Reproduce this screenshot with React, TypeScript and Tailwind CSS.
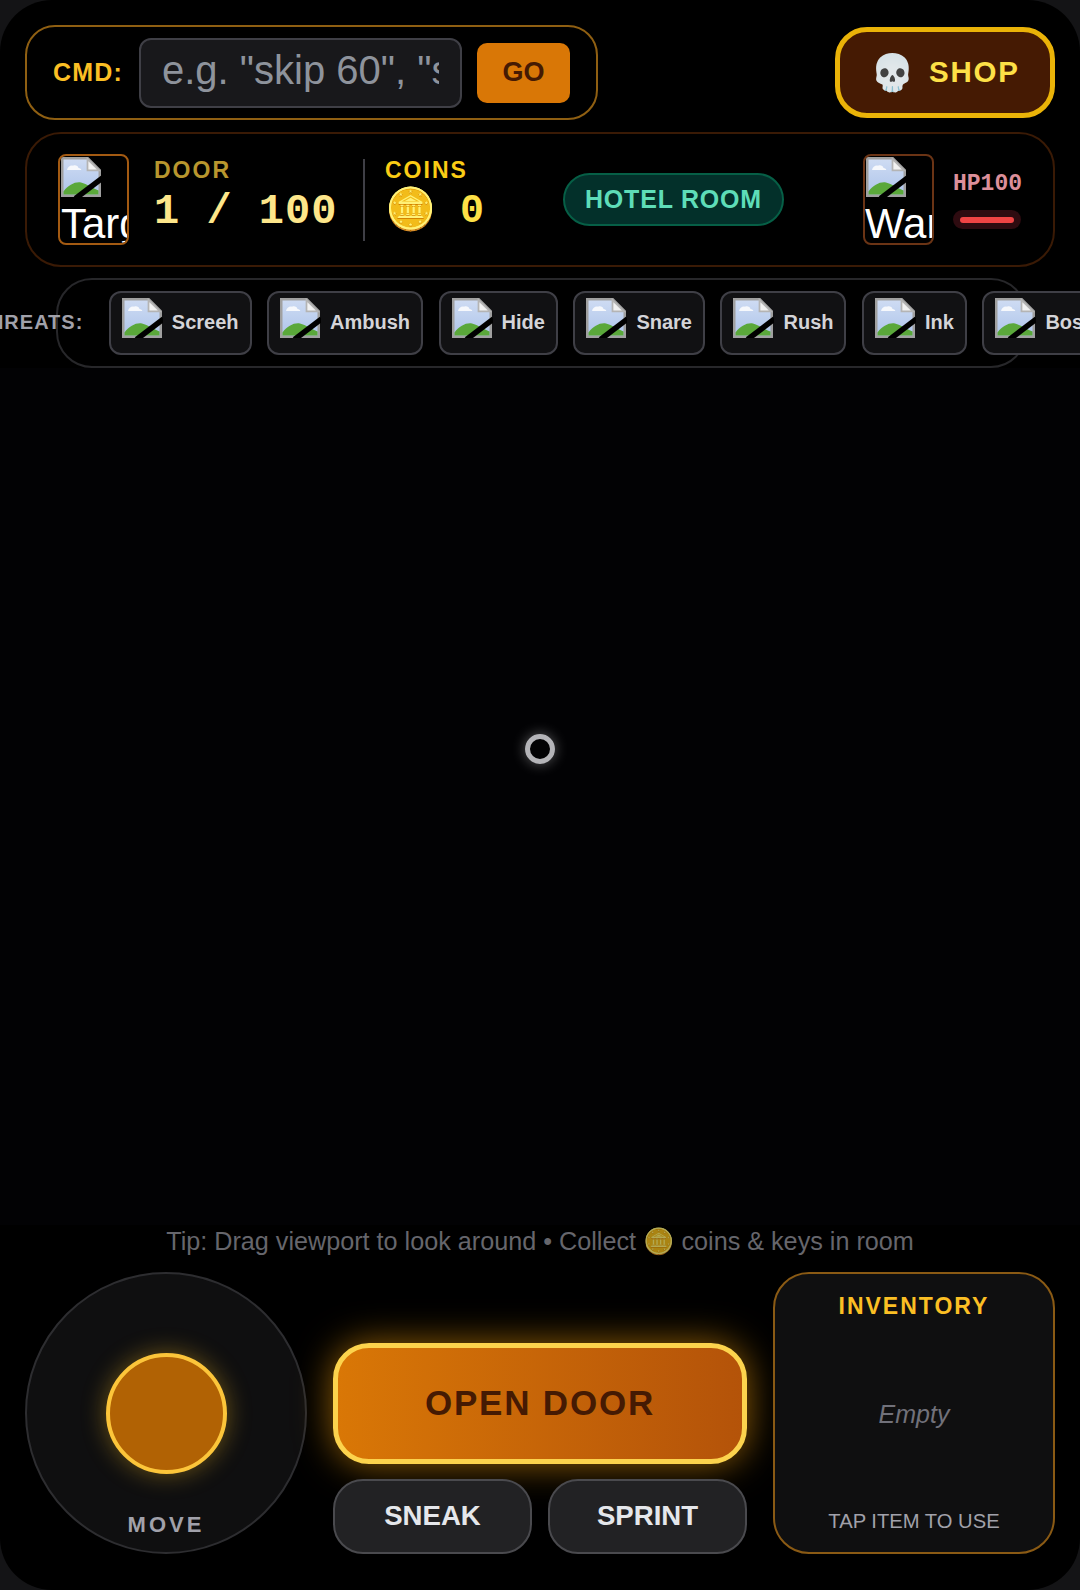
const BrokenIcon = ({ className }: { className?: string }) => (
  <svg viewBox="0 0 16 16" className={className}>
    <defs>
      <linearGradient id="sky" x1="0" y1="0" x2="0" y2="1">
        <stop offset="0" stopColor="#cfdcf3" />
        <stop offset="1" stopColor="#adc4ea" />
      </linearGradient>
    </defs>
    <path d="M0.5 0.5H10.7L15.5 5.3V15.5H0.5Z" fill="url(#sky)" stroke="#a0a0a0" strokeWidth="1" />
    <path d="M2.4 5.2c.3-1.3 1.4-2 2.4-1.7 .9-.4 2 0 2.2.9 .7 0 1.1.4 1.1.8Z" fill="#f6f8fc" />
    <path d="M1 15V13.8C3 11.2 5.6 9.8 8 10.2 10.4 10.8 12.6 12.6 15 13.4V15Z" fill="#5aa83a" />
    <path d="M10.6 0.8V5.3H15.2Z" fill="#f2f2f2" stroke="#b4b4b4" strokeWidth="0.7" />
    <path d="M5.8 16.6L16.6 8.4" stroke="#000" strokeWidth="2.2" />
  </svg>
);

const threats = ["Screeh", "Ambush", "Hide", "Snare", "Rush", "Ink", "Boss"];

export default function App() {
  return (
    <div className="w-[1080px] h-[1590px] bg-[#141416] overflow-hidden font-['Liberation_Sans',sans-serif]">
      <div className="w-full h-full bg-black rounded-[52px] overflow-hidden flex flex-col pt-[25px] pb-[36px] px-[25px]">
        <div className="flex items-center justify-between h-[95px]">
          <div className="w-[573px] h-[95px] rounded-[30px] border-2 border-[#8f5f12] flex items-center pl-[26px]">
            <span className="text-[#fbbf24] font-bold text-[25px] tracking-[1.2px] w-[70px] whitespace-nowrap">CMD:</span>
            <div className="ml-[16px] w-[323px] h-[70px] rounded-[12px] border-2 border-[#3f3f46] bg-[#18181b] flex items-center px-[21px] pb-[6px] overflow-hidden">
              <span className="text-[#8e939c] text-[40px] whitespace-nowrap overflow-hidden block w-full">e.g. "skip 60", "skip</span>
            </div>
            <div className="ml-[15px] w-[93px] h-[60px] rounded-[10px] bg-[#d97706] flex items-center justify-center text-[#451a03] font-bold text-[27px]">GO</div>
          </div>
          <div className="w-[220px] h-[91px] rounded-[32px] border-[5px] border-[#eab308] bg-[#451a03] flex items-center justify-center gap-[14px]">
            <span className="text-[36px] leading-none font-['Noto_Color_Emoji',sans-serif]">💀</span>
            <span className="text-[#fde047] font-bold text-[29.5px] tracking-[1.8px] pb-[1px]">SHOP</span>
          </div>
        </div>

        <div className="mt-[12px] h-[135px] rounded-[36px] border-2 border-[#3a1a05] flex items-center pl-[31px] pr-[32px] shrink-0">
          <div className="w-[71px] h-[91px] rounded-[8px] border-2 border-[#a35a12] overflow-hidden text-white text-[42px] leading-[48px] shrink-0">
            <BrokenIcon className="w-[42px] h-[40px] mt-px" />
            <div className="whitespace-nowrap pl-px pt-[3px]">Target</div>
          </div>
          <div className="ml-[25px] w-[190px] shrink-0 mb-[8px]">
            <div className="text-[#b8962e] font-bold text-[23px] tracking-[2px] leading-[28px] mb-[4px] pt-[1px]">DOOR</div>
            <div className="font-['Liberation_Mono',monospace] font-bold text-[#fde68a] text-[42px] leading-[48px] tracking-[1px] whitespace-nowrap">1 / 100</div>
          </div>
          <div className="w-[2px] h-[82px] bg-[#3f3f46] ml-[19px] shrink-0" />
          <div className="ml-[20px] w-[178px] shrink-0 mb-[8px]">
            <div className="text-[#facc15] font-bold text-[23px] tracking-[2px] leading-[28px] mb-[4px] pt-[1px]">COINS</div>
            <div className="flex items-center h-[48px]">
              <span className="text-[41px] leading-none font-['Noto_Color_Emoji',sans-serif] -mt-[6px]">🪙</span>
              <span className="ml-[24px] font-['Liberation_Mono',monospace] font-bold text-[#fde047] text-[40px]">0</span>
            </div>
          </div>
          <div className="w-[221px] h-[53px] rounded-full border-2 border-[#065f46] bg-[#03302a] flex items-center justify-center text-[#5eddb8] font-bold text-[25px] tracking-[0.8px] whitespace-nowrap shrink-0">HOTEL ROOM</div>
          <div className="ml-[79px] w-[71px] h-[91px] rounded-[8px] border-2 border-[#6b3415] overflow-hidden text-white text-[42px] leading-[48px] shrink-0">
            <BrokenIcon className="w-[42px] h-[40px] mt-px" />
            <div className="whitespace-nowrap pt-[3px]">Warden</div>
          </div>
          <div className="ml-[19px] w-[68px] shrink-0 pt-[3px]">
            <div className="font-['Liberation_Mono',monospace] font-bold text-[#dc8f9a] text-[23px] leading-[28px] -mt-[3px]">HP100</div>
            <div className="mt-[12px] h-[19px] rounded-full bg-[#2e0b10] px-[7px] flex items-center">
              <div className="h-[6px] w-full rounded-full bg-[#ef4444]" />
            </div>
          </div>
        </div>

        <div className="mt-[11px] h-[90px] w-[971px] ml-[31px] rounded-[36px] border-2 border-[#27272a] flex items-center justify-center gap-[15.5px] shrink-0">
          <span className="text-[#a1a1aa] font-bold text-[20px] tracking-[1px] whitespace-nowrap mr-[10px] shrink-0 pb-[2px]">THREATS:</span>
          {threats.map((t) => (
            <div key={t} className="h-[64px] rounded-[12px] border-2 border-[#3f3f46] bg-[#111113] flex items-start pl-[10px] pr-[11px] gap-[9px] shrink-0 pt-[5px]">
              <BrokenIcon className="w-[42px] h-[40px] shrink-0" />
              <span className="text-[#d4d4d8] font-bold text-[20px] leading-[24px] mt-[12px]">{t}</span>
            </div>
          ))}
        </div>

        <div className="flex-1 flex items-center justify-center bg-[#020204] -mx-[25px] pb-[96px]">
          <div className="w-[30px] h-[30px] rounded-full border-[5px] border-[#b4b4b8] shadow-[0_0_14px_rgba(255,255,255,0.35)]" />
        </div>

        <div className="text-center text-[#66666c] text-[25.2px] leading-[32px] mb-[14px] whitespace-nowrap">
          Tip: Drag viewport to look around • Collect <span className="opacity-70 font-['Noto_Color_Emoji',sans-serif]">🪙</span> coins &amp; keys in room
        </div>

        <div className="flex items-stretch h-[282px] shrink-0">
          <div className="w-[282px] h-[282px] rounded-full border-2 border-[#2d2d30] bg-[#0f0f10] flex flex-col items-center shrink-0 pt-[79px]">
            <div className="w-[121px] h-[121px] rounded-full border-[4px] border-[#fcc53a] bg-[#b16204] shadow-[0_0_24px_rgba(251,191,36,0.4)]" />
            <div className="mt-[34px] text-[#a1a1aa] font-bold text-[22px] tracking-[3px]">MOVE</div>
          </div>
          <div className="ml-[26px] w-[414px] flex flex-col justify-end shrink-0">
            <div className="h-[121px] rounded-[36px] border-[5px] border-[#fcd34d] bg-gradient-to-r from-[#d97706] to-[#b45309] flex items-center justify-center text-[#451a03] font-bold text-[35px] tracking-[1.8px] shadow-[0_0_36px_rgba(245,158,11,0.6)]">OPEN DOOR</div>
            <div className="mt-[15px] flex gap-[16px] h-[75px]">
              <div className="flex-1 rounded-[30px] border-2 border-[#4a4a4e] bg-[#222224] flex items-center justify-center text-[#e5e7eb] font-bold text-[27.6px] pb-[2px]">SNEAK</div>
              <div className="flex-1 rounded-[30px] border-2 border-[#4a4a4e] bg-[#222224] flex items-center justify-center text-[#e5e7eb] font-bold text-[27.6px] pb-[2px]">SPRINT</div>
            </div>
          </div>
          <div className="ml-[26px] w-[282px] rounded-[36px] border-2 border-[#8a5a14] bg-[#0f0f10] flex flex-col items-center shrink-0 pt-[15px] pb-[16px]">
            <div className="text-[#fbbf24] font-bold text-[23px] tracking-[2px]">INVENTORY</div>
            <div className="flex-1 flex items-center justify-center text-[#71717a] italic text-[25px]">Empty</div>
            <div className="text-[#a1a1aa] text-[20.2px]">TAP ITEM TO USE</div>
          </div>
        </div>
      </div>
    </div>
  );
}
